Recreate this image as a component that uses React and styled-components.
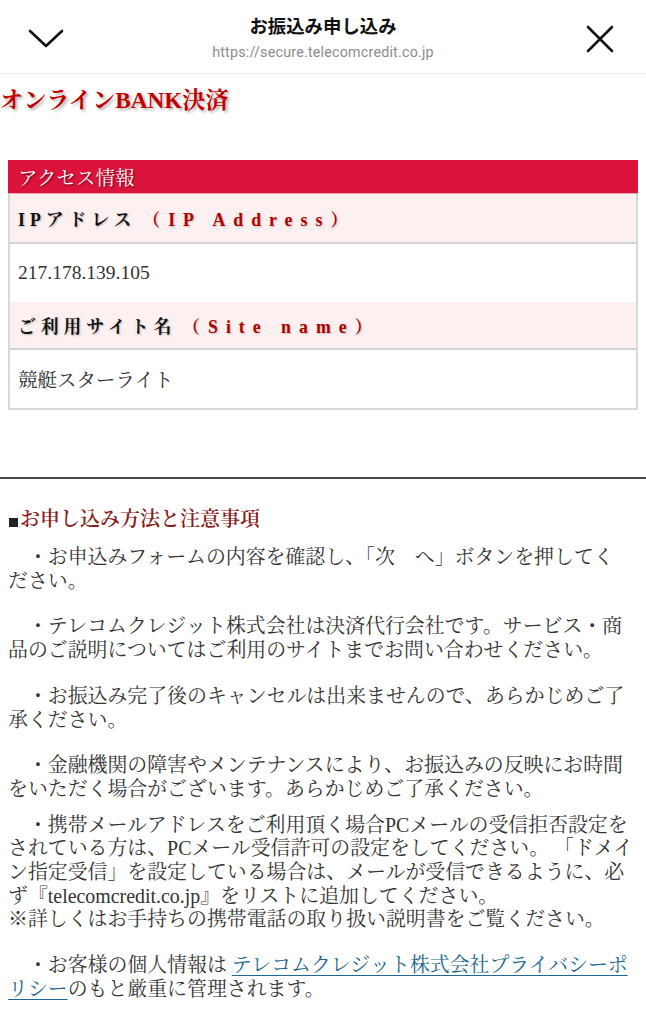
import React from "react";
import styled, { createGlobalStyle } from "styled-components";

const serif = `"Liberation Serif", "Noto Serif CJK JP", "Noto Sans CJK JP", serif`;
const sans = `"Noto Sans CJK JP", "Liberation Sans", sans-serif`;

const Global = createGlobalStyle`
  html, body { margin: 0; padding: 0; background: #fff; }
  body { font-family: ${serif}; color: #333; }
  * { box-sizing: border-box; }
`;

const TopBar = styled.header`
  height: 74px;
  border-bottom: 1px solid #e8e8e8;
  display: grid;
  grid-template-columns: 96px 1fr 96px;
  align-items: center;
`;

const IconButton = styled.button`
  background: none;
  border: 0;
  padding: 0;
  display: flex;
  align-items: center;
  justify-content: ${(p) => (p.$right ? "flex-end" : "flex-start")};
  padding-left: ${(p) => (p.$right ? "0" : "28px")};
  padding-right: ${(p) => (p.$right ? "32px" : "0")};
  padding-top: 4px;
  height: 100%;
`;

const TitleBlock = styled.div`
  display: flex;
  flex-direction: column;
  align-items: center;
`;

const PageTitle = styled.div`
  font-family: ${sans};
  font-weight: 700;
  font-size: 18.4px;
  line-height: 24px;
  color: #111;
`;

const Url = styled.div`
  font-family: "Roboto", "Liberation Sans", sans-serif;
  font-size: 14.3px;
  line-height: 18px;
  color: #8c8c8c;
  margin-top: 6px;
  letter-spacing: 0.2px;
`;

const Main = styled.main`
  display: flex;
  flex-direction: column;
`;

const BrandTitle = styled.h1`
  margin: 12px 0 0 0;
  font-family: ${serif};
  font-size: 23.2px;
  line-height: 28px;
  font-weight: 700;
  color: #c00000;
  text-shadow: 2px 2px 3px #b0b0b0;
`;

const InfoTable = styled.section`
  margin: 46px 8px 0 8px;
  border: 2px solid #d8d8d8;
  border-top: 0;
  display: flex;
  flex-direction: column;
`;

const TableHead = styled.div`
  background: #dc143c;
  height: 34px;
  margin: 0 -2px;
  padding: 0 10px;
  display: flex;
  align-items: center;
  color: #fff;
  font-size: 19.5px;
  text-shadow: 1px 1px 2px #6a0015;
  border-bottom: 1px solid #e6a5b2;
`;

const LabelCell = styled.div`
  background: #fdf0f0;
  height: ${(p) => p.$h}px;
  padding: 0 8px;
  display: flex;
  align-items: center;
  font-size: 17.8px;
  font-weight: 700;
  letter-spacing: 5px;
  color: #111;
  text-shadow: 1px 1px 2px #bbb;
  border-bottom: ${(p) => (p.$border ? "2px solid #d4d4d4" : "0")};
`;

const LabelEn = styled.span`
  color: #b00000;
  letter-spacing: 8px;
  margin-left: 6px;
`;

const ValueCell = styled.div`
  height: ${(p) => p.$h}px;
  padding: 0 8px;
  display: flex;
  align-items: center;
  font-size: 19.5px;
  color: #333;
`;

const Divider = styled.hr`
  margin: 67px 0 0 0;
  border: 0;
  height: 2px;
  background: #4a4a4a;
`;

const Notes = styled.section`
  padding: 0 8px;
  display: flex;
  flex-direction: column;
`;

const NotesTitle = styled.h2`
  margin: 28px 0 0 0;
  font-size: 20px;
  line-height: 24px;
  font-weight: 600;
  color: #8b1a1a;
  display: flex;
  align-items: center;
`;

const Square = styled.span`
  display: inline-block;
  width: 9px;
  height: 9px;
  background: #222;
  margin: 6px 2px 0 1px;
`;

const Para = styled.p`
  margin: ${(p) => p.$gap ?? 22}px 0 0 0;
  font-size: 19.9px;
  line-height: 23.7px;
  color: #333;
  white-space: nowrap;
  text-indent: 1em;
`;

const Link = styled.a`
  color: #22668f;
  text-decoration: underline;
  text-underline-offset: 3px;
`;

const ChevronDown = () => (
  <svg width="36" height="20" viewBox="0 0 36 20" fill="none">
    <path d="M2 2 L18 17 L34 2" stroke="#111" strokeWidth="2.6" strokeLinecap="round" strokeLinejoin="round" />
  </svg>
);

const CloseIcon = () => (
  <svg width="28" height="28" viewBox="0 0 28 28" fill="none">
    <path d="M2 2 L26 26 M26 2 L2 26" stroke="#111" strokeWidth="2.6" strokeLinecap="round" />
  </svg>
);

export default function App() {
  return (
    <>
      <Global />
      <TopBar>
        <IconButton aria-label="閉じる">
          <ChevronDown />
        </IconButton>
        <TitleBlock>
          <PageTitle>お振込み申し込み</PageTitle>
          <Url>https://secure.telecomcredit.co.jp</Url>
        </TitleBlock>
        <IconButton $right aria-label="終了">
          <CloseIcon />
        </IconButton>
      </TopBar>
      <Main>
        <BrandTitle>オンラインBANK決済</BrandTitle>
        <InfoTable>
          <TableHead>アクセス情報</TableHead>
          <LabelCell $h={50} $border>
            IPアドレス<LabelEn>（IP Address）</LabelEn>
          </LabelCell>
          <ValueCell $h={58}>217.178.139.105</ValueCell>
          <LabelCell $h={48} $border>
            ご利用サイト名<LabelEn>（Site name）</LabelEn>
          </LabelCell>
          <ValueCell $h={58}>競艇スターライト</ValueCell>
        </InfoTable>
        <Divider />
        <Notes>
          <NotesTitle>
            <Square />
            お申し込み方法と注意事項
          </NotesTitle>
          <Para $gap={15}>
            ・お申込みフォームの内容を確認し、「次　へ」ボタンを押してく
            <br />
            ださい。
          </Para>
          <Para>
            ・テレコムクレジット株式会社は決済代行会社です。サービス・商
            <br />
            品のご説明についてはご利用のサイトまでお問い合わせください。
          </Para>
          <Para>
            ・お振込み完了後のキャンセルは出来ませんので、あらかじめご了
            <br />
            承ください。
          </Para>
          <Para>
            ・金融機関の障害やメンテナンスにより、お振込みの反映にお時間
            <br />
            をいただく場合がございます。あらかじめご了承ください。
          </Para>
          <Para $gap={12}>
            ・携帯メールアドレスをご利用頂く場合PCメールの受信拒否設定を
            <br />
            されている方は、PCメール受信許可の設定をしてください。 「ドメイ
            <br />
            ン指定受信」を設定している場合は、メールが受信できるように、必
            <br />
            ず『telecomcredit.co.jp』をリストに追加してください。
            <br />
            ※詳しくはお手持ちの携帯電話の取り扱い説明書をご覧ください。
          </Para>
          <Para>
            ・お客様の個人情報は <Link href="#">テレコムクレジット株式会社プライバシーポ
            <br />
            リシー</Link>のもと厳重に管理されます。
          </Para>
        </Notes>
      </Main>
    </>
  );
}
